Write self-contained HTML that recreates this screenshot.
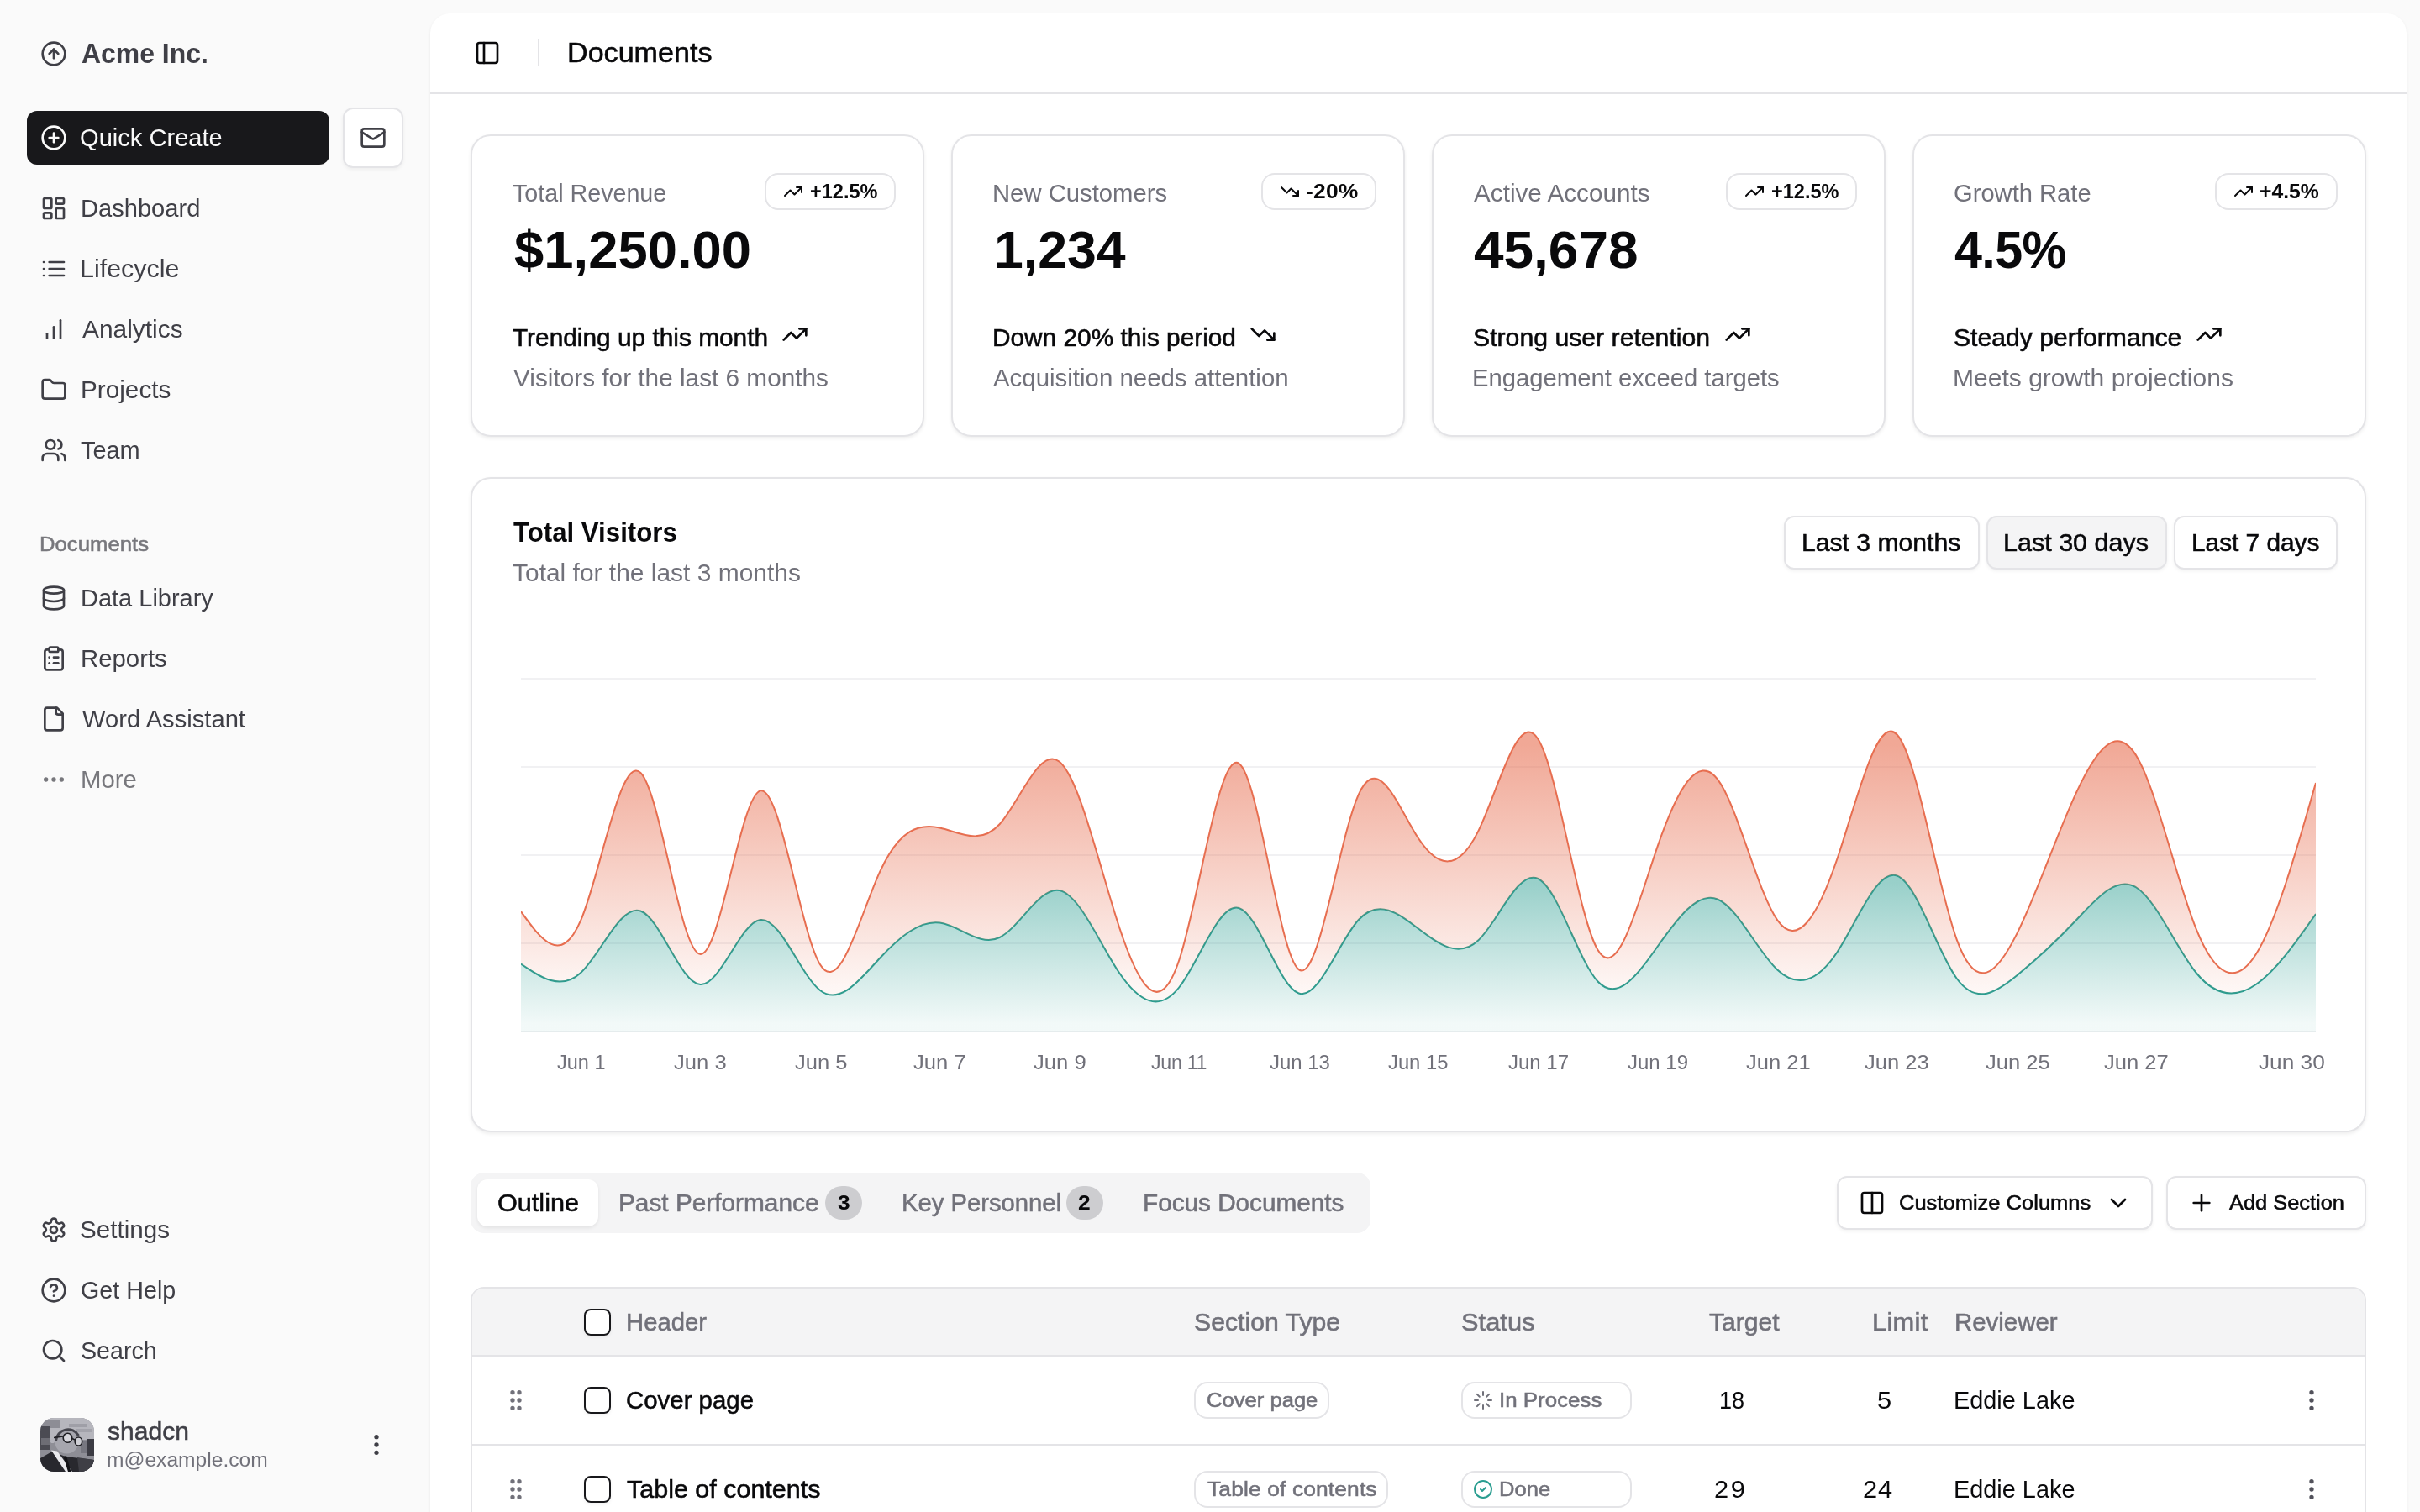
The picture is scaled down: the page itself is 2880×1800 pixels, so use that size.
<!DOCTYPE html>
<html lang="en"><head><meta charset="utf-8"><title>Documents</title>
<style>
*{box-sizing:border-box;margin:0;padding:0}
html,body{width:2880px;height:1800px;overflow:hidden;background:#fafafa;font-family:"Liberation Sans",sans-serif;-webkit-font-smoothing:antialiased}
.t{position:absolute;white-space:nowrap;transform-origin:0 0}
.ic{position:absolute;display:block;overflow:visible}
.abs{position:absolute}
.card{position:absolute;background:#fff;border:2px solid #e4e4e7;border-radius:24px;box-shadow:0 2px 4px 0 rgba(0,0,0,.07)}
.badge{position:absolute;border:2px solid #e4e4e7;border-radius:16px;background:#fff}
.btn{position:absolute;border:2px solid #e4e4e7;border-radius:12px;background:#fff;box-shadow:0 2px 4px 0 rgba(0,0,0,.05)}
.cb{position:absolute;width:32px;height:32px;border:2px solid #18181b;border-radius:8px;background:#fff;box-shadow:0 2px 4px 0 rgba(0,0,0,.05)}
#root{position:absolute;left:0;top:0;width:2880px;height:1800px;overflow:hidden;will-change:transform}
@media (max-width:1600px){html,body{width:1440px;height:900px}#root{zoom:.5}}
</style></head><body><div id="root">

<svg class="ic" style="left:48px;top:48px;color:#3f3f46" width="32" height="32" viewBox="0 0 24 24" fill="none" stroke="currentColor" stroke-width="2" stroke-linecap="round" stroke-linejoin="round" ><circle cx="12" cy="12" r="10"/><path d="m16 12-4-4-4 4"/><path d="M12 16V8"/></svg>
<div class="t" style="left:96.75px;top:47.30px;font-size:33.0px;line-height:33.0px;color:#3f3f46;font-weight:700;transform:scaleX(0.9674);">Acme Inc.</div>
<div class="abs" style="left:32px;top:132px;width:360px;height:64px;border-radius:12px;background:#18181b"></div>
<svg class="ic" style="left:48px;top:148px;color:#fafafa" width="32" height="32" viewBox="0 0 24 24" fill="none" stroke="currentColor" stroke-width="2" stroke-linecap="round" stroke-linejoin="round" ><circle cx="12" cy="12" r="10"/><path d="M8 12h8"/><path d="M12 8v8"/></svg>
<div class="t" style="left:95.47px;top:149.90px;font-size:28.8px;line-height:28.8px;color:#fafafa;font-weight:400;transform:scaleX(1.0104);">Quick Create</div>
<div class="btn" style="left:408px;top:128px;width:72px;height:72px"></div>
<svg class="ic" style="left:428px;top:148px;color:#3f3f46" width="32" height="32" viewBox="0 0 24 24" fill="none" stroke="currentColor" stroke-width="2" stroke-linecap="round" stroke-linejoin="round" ><rect width="20" height="16" x="2" y="4" rx="2"/><path d="m22 7-8.97 5.7a1.94 1.94 0 0 1-2.06 0L2 7"/></svg>
<svg class="ic" style="left:48px;top:232px;color:#3f3f46" width="32" height="32" viewBox="0 0 24 24" fill="none" stroke="currentColor" stroke-width="2" stroke-linecap="round" stroke-linejoin="round" ><rect width="7" height="9" x="3" y="3" rx="1"/><rect width="7" height="5" x="14" y="3" rx="1"/><rect width="7" height="9" x="14" y="12" rx="1"/><rect width="7" height="5" x="3" y="16" rx="1"/></svg>
<div class="t" style="left:95.73px;top:233.90px;font-size:28.8px;line-height:28.8px;color:#3f3f46;font-weight:400;transform:scaleX(1.0103);">Dashboard</div>
<svg class="ic" style="left:48px;top:304px;color:#3f3f46" width="32" height="32" viewBox="0 0 24 24" fill="none" stroke="currentColor" stroke-width="2" stroke-linecap="round" stroke-linejoin="round" ><path d="M3 12h.01"/><path d="M3 18h.01"/><path d="M3 6h.01"/><path d="M8 12h13"/><path d="M8 18h13"/><path d="M8 6h13"/></svg>
<div class="t" style="left:95.34px;top:305.90px;font-size:28.8px;line-height:28.8px;color:#3f3f46;font-weight:400;transform:scaleX(1.0563);">Lifecycle</div>
<svg class="ic" style="left:48px;top:376px;color:#3f3f46" width="32" height="32" viewBox="0 0 24 24" fill="none" stroke="currentColor" stroke-width="2" stroke-linecap="round" stroke-linejoin="round" ><path d="M12 20V10"/><path d="M18 20V4"/><path d="M6 20v-4"/></svg>
<div class="t" style="left:97.52px;top:377.90px;font-size:28.8px;line-height:28.8px;color:#3f3f46;font-weight:400;transform:scaleX(1.0384);">Analytics</div>
<svg class="ic" style="left:48px;top:448px;color:#3f3f46" width="32" height="32" viewBox="0 0 24 24" fill="none" stroke="currentColor" stroke-width="2" stroke-linecap="round" stroke-linejoin="round" ><path d="M20 20a2 2 0 0 0 2-2V8a2 2 0 0 0-2-2h-7.9a2 2 0 0 1-1.69-.9L9.6 3.9A2 2 0 0 0 7.93 3H4a2 2 0 0 0-2 2v13a2 2 0 0 0 2 2Z"/></svg>
<div class="t" style="left:95.55px;top:449.90px;font-size:28.8px;line-height:28.8px;color:#3f3f46;font-weight:400;transform:scaleX(1.0323);">Projects</div>
<svg class="ic" style="left:48px;top:520px;color:#3f3f46" width="32" height="32" viewBox="0 0 24 24" fill="none" stroke="currentColor" stroke-width="2" stroke-linecap="round" stroke-linejoin="round" ><path d="M16 21v-2a4 4 0 0 0-4-4H6a4 4 0 0 0-4 4v2"/><circle cx="9" cy="7" r="4"/><path d="M22 21v-2a4 4 0 0 0-3-3.87"/><path d="M16 3.13a4 4 0 0 1 0 7.75"/></svg>
<div class="t" style="left:95.68px;top:521.90px;font-size:28.8px;line-height:28.8px;color:#3f3f46;font-weight:400;transform:scaleX(1.0037);">Team</div>
<div class="t" style="left:46.82px;top:636.25px;font-size:24.7px;line-height:24.7px;color:#77777c;font-weight:400;transform:scaleX(1.0413);-webkit-text-stroke:0.55px;">Documents</div>
<svg class="ic" style="left:48px;top:696px;color:#3f3f46" width="32" height="32" viewBox="0 0 24 24" fill="none" stroke="currentColor" stroke-width="2" stroke-linecap="round" stroke-linejoin="round" ><ellipse cx="12" cy="5" rx="9" ry="3"/><path d="M3 5V19A9 3 0 0 0 21 19V5"/><path d="M3 12A9 3 0 0 0 21 12"/></svg>
<div class="t" style="left:95.78px;top:697.90px;font-size:28.8px;line-height:28.8px;color:#3f3f46;font-weight:400;transform:scaleX(1.0064);">Data Library</div>
<svg class="ic" style="left:48px;top:768px;color:#3f3f46" width="32" height="32" viewBox="0 0 24 24" fill="none" stroke="currentColor" stroke-width="2" stroke-linecap="round" stroke-linejoin="round" ><rect width="8" height="4" x="8" y="2" rx="1" ry="1"/><path d="M16 4h2a2 2 0 0 1 2 2v14a2 2 0 0 1-2 2H6a2 2 0 0 1-2-2V6a2 2 0 0 1 2-2h2"/><path d="M12 11h4"/><path d="M12 16h4"/><path d="M8 11h.01"/><path d="M8 16h.01"/></svg>
<div class="t" style="left:95.67px;top:769.90px;font-size:28.8px;line-height:28.8px;color:#3f3f46;font-weight:400;transform:scaleX(1.0193);">Reports</div>
<svg class="ic" style="left:48px;top:840px;color:#3f3f46" width="32" height="32" viewBox="0 0 24 24" fill="none" stroke="currentColor" stroke-width="2" stroke-linecap="round" stroke-linejoin="round" ><path d="M15 2H6a2 2 0 0 0-2 2v16a2 2 0 0 0 2 2h12a2 2 0 0 0 2-2V7Z"/><path d="M14 2v4a2 2 0 0 0 2 2h4"/></svg>
<div class="t" style="left:97.51px;top:841.90px;font-size:28.8px;line-height:28.8px;color:#3f3f46;font-weight:400;transform:scaleX(1.0128);">Word Assistant</div>
<svg class="ic" style="left:48px;top:912px;color:#77777c" width="32" height="32" viewBox="0 0 24 24" fill="none" stroke="currentColor" stroke-width="2" stroke-linecap="round" stroke-linejoin="round" ><circle cx="12" cy="12" r="1"/><circle cx="19" cy="12" r="1"/><circle cx="5" cy="12" r="1"/></svg>
<div class="t" style="left:95.66px;top:913.90px;font-size:28.8px;line-height:28.8px;color:#77777c;font-weight:400;transform:scaleX(1.0191);">More</div>
<svg class="ic" style="left:48px;top:1448px;color:#3f3f46" width="32" height="32" viewBox="0 0 24 24" fill="none" stroke="currentColor" stroke-width="2" stroke-linecap="round" stroke-linejoin="round" ><path d="M12.22 2h-.44a2 2 0 0 0-2 2v.18a2 2 0 0 1-1 1.73l-.43.25a2 2 0 0 1-2 0l-.15-.08a2 2 0 0 0-2.73.73l-.22.38a2 2 0 0 0 .73 2.73l.15.1a2 2 0 0 1 1 1.72v.51a2 2 0 0 1-1 1.74l-.15.09a2 2 0 0 0-.73 2.73l.22.38a2 2 0 0 0 2.73.73l.15-.08a2 2 0 0 1 2 0l.43.25a2 2 0 0 1 1 1.73V20a2 2 0 0 0 2 2h.44a2 2 0 0 0 2-2v-.18a2 2 0 0 1 1-1.73l.43-.25a2 2 0 0 1 2 0l.15.08a2 2 0 0 0 2.73-.73l.22-.39a2 2 0 0 0-.73-2.73l-.15-.08a2 2 0 0 1-1-1.74v-.5a2 2 0 0 1 1-1.74l.15-.09a2 2 0 0 0 .73-2.73l-.22-.38a2 2 0 0 0-2.73-.73l-.15.08a2 2 0 0 1-2 0l-.43-.25a2 2 0 0 1-1-1.73V4a2 2 0 0 0-2-2z"/><circle cx="12" cy="12" r="3"/></svg>
<div class="t" style="left:95.00px;top:1449.90px;font-size:28.8px;line-height:28.8px;color:#3f3f46;font-weight:400;transform:scaleX(1.0283);">Settings</div>
<svg class="ic" style="left:48px;top:1520px;color:#3f3f46" width="32" height="32" viewBox="0 0 24 24" fill="none" stroke="currentColor" stroke-width="2" stroke-linecap="round" stroke-linejoin="round" ><circle cx="12" cy="12" r="10"/><path d="M9.09 9a3 3 0 0 1 5.83 1c0 2-3 3-3 3"/><path d="M12 17h.01"/></svg>
<div class="t" style="left:95.92px;top:1521.90px;font-size:28.8px;line-height:28.8px;color:#3f3f46;font-weight:400;transform:scaleX(0.9965);">Get Help</div>
<svg class="ic" style="left:48px;top:1592px;color:#3f3f46" width="32" height="32" viewBox="0 0 24 24" fill="none" stroke="currentColor" stroke-width="2" stroke-linecap="round" stroke-linejoin="round" ><circle cx="11" cy="11" r="8"/><path d="m21 21-4.3-4.3"/></svg>
<div class="t" style="left:95.86px;top:1593.90px;font-size:28.8px;line-height:28.8px;color:#3f3f46;font-weight:400;transform:scaleX(0.9952);">Search</div>
<svg class="ic" style="left:48px;top:1688px" width="64" height="64" viewBox="0 0 64 64"><defs><clipPath id="av"><rect width="64" height="64" rx="16"/></clipPath></defs><g clip-path="url(#av)"><rect width="64" height="64" fill="#8e8e96"/><rect width="64" height="26" fill="#b6b6bd"/><rect y="3" width="24" height="9" fill="#8d8d95"/><rect x="34" y="7" width="22" height="4" fill="#9f9fa7"/><rect x="42" y="13" width="20" height="4" fill="#a3a3ab"/><rect y="10" width="12" height="28" fill="#4b4b53"/><rect x="1" y="24" width="10" height="8" fill="#6d6d75"/><rect x="56" y="25" width="8" height="20" fill="#3b3b43"/><rect x="48" y="28" width="8" height="14" fill="#777780"/><path d="M0 48L14 40L30 46L64 50V64H0Z" fill="#28282e"/><path d="M44 47L64 50V64H46Z" fill="#3e3e45"/><circle cx="31.4" cy="28.5" r="14" fill="#a6a6ae"/><path d="M18.5 27A14.5 14.5 0 0 1 45.5 21" stroke="#45454d" stroke-width="3" fill="none"/><circle cx="14.5" cy="27.5" r="2.6" fill="#b3b3bb"/><ellipse cx="32.5" cy="23.8" rx="5.3" ry="5.5" fill="#d6d6dc" stroke="#1f1f24" stroke-width="1.6"/><ellipse cx="45.4" cy="28" rx="4.3" ry="5" fill="#cfcfd5" stroke="#1f1f24" stroke-width="1.6"/><path d="M16 23.5L27 22M38 24.5L41 26" stroke="#1f1f24" stroke-width="1.6" fill="none"/><path d="M13 38.5L20 39.5L38 64H30Z" fill="#e9e9ed"/><path d="M27.5 46L31 45L36.5 64H33Z" fill="#131317"/></g></svg>
<div class="t" style="left:128.17px;top:1689.90px;font-size:28.8px;line-height:28.8px;color:#3f3f46;font-weight:400;transform:scaleX(1.0434);-webkit-text-stroke:0.55px;">shadcn</div>
<div class="t" style="left:127.30px;top:1726.25px;font-size:24.7px;line-height:24.7px;color:#71717a;font-weight:400;transform:scaleX(0.9960);">m@example.com</div>
<svg class="ic" style="left:432px;top:1704px;color:#3f3f46" width="32" height="32" viewBox="0 0 24 24" fill="none" stroke="currentColor" stroke-width="2" stroke-linecap="round" stroke-linejoin="round" ><circle cx="12" cy="12" r="1"/><circle cx="12" cy="5" r="1"/><circle cx="12" cy="19" r="1"/></svg>
<div class="abs" style="left:512px;top:16px;width:2352px;height:1900px;background:#fff;border-radius:24px;box-shadow:0 2px 4px 0 rgba(0,0,0,.07)"></div>
<div class="abs" style="left:512px;top:110px;width:2352px;height:2px;background:#e4e4e7"></div>
<svg class="ic" style="left:564px;top:47px;color:#09090b" width="32" height="32" viewBox="0 0 24 24" fill="none" stroke="currentColor" stroke-width="2" stroke-linecap="round" stroke-linejoin="round" ><rect width="18" height="18" x="3" y="3" rx="2"/><path d="M9 3v18"/></svg>
<div class="abs" style="left:640px;top:47px;width:2px;height:32px;background:#e4e4e7"></div>
<div class="t" style="left:674.51px;top:46.30px;font-size:33.0px;line-height:33.0px;color:#09090b;font-weight:400;transform:scaleX(1.0334);-webkit-text-stroke:0.55px;">Documents</div>
<div class="card" style="left:560px;top:160px;width:540px;height:360px"></div>
<div class="t" style="left:609.72px;top:215.90px;font-size:28.8px;line-height:28.8px;color:#71717a;font-weight:400;transform:scaleX(0.9953);">Total Revenue</div>
<div class="t" style="left:612.12px;top:265.80px;font-size:63px;line-height:63px;color:#09090b;font-weight:700;transform:scaleX(1.0063);">$1,250.00</div>
<div class="badge" style="left:910px;top:206px;width:156px;height:44px"></div>
<svg class="ic" style="left:932px;top:216px;color:#09090b" width="24" height="24" viewBox="0 0 24 24" fill="none" stroke="currentColor" stroke-width="2" stroke-linecap="round" stroke-linejoin="round" ><polyline points="22 7 13.5 15.5 8.5 10.5 2 17"/><polyline points="16 7 22 7 22 13"/></svg>
<div class="t" style="left:964.05px;top:216.25px;font-size:24.7px;line-height:24.7px;color:#09090b;font-weight:700;transform:scaleX(0.9530);">+12.5%</div>
<div class="t" style="left:609.90px;top:387.90px;font-size:28.8px;line-height:28.8px;color:#09090b;font-weight:400;transform:scaleX(1.0362);-webkit-text-stroke:0.55px;">Trending up this month</div>
<svg class="ic" style="left:930px;top:382px;color:#09090b" width="32" height="32" viewBox="0 0 24 24" fill="none" stroke="currentColor" stroke-width="2" stroke-linecap="round" stroke-linejoin="round" ><polyline points="22 7 13.5 15.5 8.5 10.5 2 17"/><polyline points="16 7 22 7 22 13"/></svg>
<div class="t" style="left:610.82px;top:435.90px;font-size:28.8px;line-height:28.8px;color:#71717a;font-weight:400;transform:scaleX(1.0336);">Visitors for the last 6 months</div>
<div class="card" style="left:1132px;top:160px;width:540px;height:360px"></div>
<div class="t" style="left:1180.61px;top:215.90px;font-size:28.8px;line-height:28.8px;color:#71717a;font-weight:400;transform:scaleX(1.0157);">New Customers</div>
<div class="t" style="left:1182.70px;top:265.80px;font-size:63px;line-height:63px;color:#09090b;font-weight:700;transform:scaleX(0.9938);">1,234</div>
<div class="badge" style="left:1501px;top:206px;width:137px;height:44px"></div>
<svg class="ic" style="left:1523px;top:216px;color:#09090b" width="24" height="24" viewBox="0 0 24 24" fill="none" stroke="currentColor" stroke-width="2" stroke-linecap="round" stroke-linejoin="round" ><polyline points="22 17 13.5 8.5 8.5 13.5 2 7"/><polyline points="16 17 22 17 22 11"/></svg>
<div class="t" style="left:1554.17px;top:216.25px;font-size:24.7px;line-height:24.7px;color:#09090b;font-weight:700;transform:scaleX(1.0700);letter-spacing:0.189px;">-20%</div>
<div class="t" style="left:1180.53px;top:387.90px;font-size:28.8px;line-height:28.8px;color:#09090b;font-weight:400;transform:scaleX(1.0350);-webkit-text-stroke:0.55px;">Down 20% this period</div>
<svg class="ic" style="left:1487px;top:382px;color:#09090b" width="32" height="32" viewBox="0 0 24 24" fill="none" stroke="currentColor" stroke-width="2" stroke-linecap="round" stroke-linejoin="round" ><polyline points="22 17 13.5 8.5 8.5 13.5 2 7"/><polyline points="16 17 22 17 22 11"/></svg>
<div class="t" style="left:1182.29px;top:435.90px;font-size:28.8px;line-height:28.8px;color:#71717a;font-weight:400;transform:scaleX(1.0215);">Acquisition needs attention</div>
<div class="card" style="left:1704px;top:160px;width:540px;height:360px"></div>
<div class="t" style="left:1754.45px;top:215.90px;font-size:28.8px;line-height:28.8px;color:#71717a;font-weight:400;transform:scaleX(1.0306);">Active Accounts</div>
<div class="t" style="left:1754.14px;top:265.80px;font-size:63px;line-height:63px;color:#09090b;font-weight:700;transform:scaleX(1.0147);">45,678</div>
<div class="badge" style="left:2054px;top:206px;width:156px;height:44px"></div>
<svg class="ic" style="left:2076px;top:216px;color:#09090b" width="24" height="24" viewBox="0 0 24 24" fill="none" stroke="currentColor" stroke-width="2" stroke-linecap="round" stroke-linejoin="round" ><polyline points="22 7 13.5 15.5 8.5 10.5 2 17"/><polyline points="16 7 22 7 22 13"/></svg>
<div class="t" style="left:2108.05px;top:216.25px;font-size:24.7px;line-height:24.7px;color:#09090b;font-weight:700;transform:scaleX(0.9530);">+12.5%</div>
<div class="t" style="left:1753.49px;top:387.90px;font-size:28.8px;line-height:28.8px;color:#09090b;font-weight:400;transform:scaleX(1.0491);-webkit-text-stroke:0.55px;">Strong user retention</div>
<svg class="ic" style="left:2051.6px;top:382px;color:#09090b" width="32" height="32" viewBox="0 0 24 24" fill="none" stroke="currentColor" stroke-width="2" stroke-linecap="round" stroke-linejoin="round" ><polyline points="22 7 13.5 15.5 8.5 10.5 2 17"/><polyline points="16 7 22 7 22 13"/></svg>
<div class="t" style="left:1752.07px;top:435.90px;font-size:28.8px;line-height:28.8px;color:#71717a;font-weight:400;transform:scaleX(1.0151);">Engagement exceed targets</div>
<div class="card" style="left:2276px;top:160px;width:540px;height:360px"></div>
<div class="t" style="left:2324.87px;top:215.90px;font-size:28.8px;line-height:28.8px;color:#71717a;font-weight:400;transform:scaleX(1.0123);">Growth Rate</div>
<div class="t" style="left:2326.30px;top:265.80px;font-size:63px;line-height:63px;color:#09090b;font-weight:700;transform:scaleX(0.9400);letter-spacing:-0.629px;">4.5%</div>
<div class="badge" style="left:2636px;top:206px;width:146px;height:44px"></div>
<svg class="ic" style="left:2658px;top:216px;color:#09090b" width="24" height="24" viewBox="0 0 24 24" fill="none" stroke="currentColor" stroke-width="2" stroke-linecap="round" stroke-linejoin="round" ><polyline points="22 7 13.5 15.5 8.5 10.5 2 17"/><polyline points="16 7 22 7 22 13"/></svg>
<div class="t" style="left:2688.89px;top:216.25px;font-size:24.7px;line-height:24.7px;color:#09090b;font-weight:700;transform:scaleX(1.0011);">+4.5%</div>
<div class="t" style="left:2324.91px;top:387.90px;font-size:28.8px;line-height:28.8px;color:#09090b;font-weight:400;transform:scaleX(1.0462);-webkit-text-stroke:0.55px;">Steady performance</div>
<svg class="ic" style="left:2613px;top:382px;color:#09090b" width="32" height="32" viewBox="0 0 24 24" fill="none" stroke="currentColor" stroke-width="2" stroke-linecap="round" stroke-linejoin="round" ><polyline points="22 7 13.5 15.5 8.5 10.5 2 17"/><polyline points="16 7 22 7 22 13"/></svg>
<div class="t" style="left:2323.97px;top:435.90px;font-size:28.8px;line-height:28.8px;color:#71717a;font-weight:400;transform:scaleX(1.0432);">Meets growth projections</div>
<div class="card" style="left:560px;top:568px;width:2256px;height:780px"></div>
<div class="t" style="left:610.80px;top:617.30px;font-size:33.0px;line-height:33.0px;color:#09090b;font-weight:700;transform:scaleX(0.9454);">Total Visitors</div>
<div class="t" style="left:609.72px;top:667.90px;font-size:28.8px;line-height:28.8px;color:#71717a;font-weight:400;transform:scaleX(1.0400);">Total for the last 3 months</div>
<div class="btn" style="left:2123px;top:614px;width:233px;height:64px;background:#fff"></div>
<div class="t" style="left:2144.10px;top:631.90px;font-size:28.8px;line-height:28.8px;color:#09090b;font-weight:400;transform:scaleX(1.0464);-webkit-text-stroke:0.55px;">Last 3 months</div>
<div class="btn" style="left:2364px;top:614px;width:215px;height:64px;background:#f4f4f5"></div>
<div class="t" style="left:2384.04px;top:631.90px;font-size:28.8px;line-height:28.8px;color:#09090b;font-weight:400;transform:scaleX(1.0592);-webkit-text-stroke:0.55px;">Last 30 days</div>
<div class="btn" style="left:2587px;top:614px;width:195px;height:64px;background:#fff"></div>
<div class="t" style="left:2607.70px;top:631.90px;font-size:28.8px;line-height:28.8px;color:#09090b;font-weight:400;transform:scaleX(1.0343);-webkit-text-stroke:0.55px;">Last 7 days</div>
<svg class="ic" style="left:0;top:0" width="2880" height="1800" viewBox="0 0 2880 1800"><defs><linearGradient id="gd" x1="0" y1="0" x2="0" y2="1"><stop offset="5%" stop-color="#e76e50" stop-opacity="1"/><stop offset="95%" stop-color="#e76e50" stop-opacity="0.1"/></linearGradient><linearGradient id="gm" x1="0" y1="0" x2="0" y2="1"><stop offset="5%" stop-color="#2a9d90" stop-opacity="0.8"/><stop offset="95%" stop-color="#2a9d90" stop-opacity="0.1"/></linearGradient><clipPath id="cp"><rect x="620" y="808" width="2136" height="421"/></clipPath></defs><line x1="620" x2="2756" y1="808" y2="808" stroke="#e4e4e7" stroke-opacity="0.5" stroke-width="2"/><line x1="620" x2="2756" y1="913" y2="913" stroke="#e4e4e7" stroke-opacity="0.5" stroke-width="2"/><line x1="620" x2="2756" y1="1018" y2="1018" stroke="#e4e4e7" stroke-opacity="0.5" stroke-width="2"/><line x1="620" x2="2756" y1="1123" y2="1123" stroke="#e4e4e7" stroke-opacity="0.5" stroke-width="2"/><line x1="620" x2="2756" y1="1228" y2="1228" stroke="#e4e4e7" stroke-opacity="0.5" stroke-width="2"/><g clip-path="url(#cp)"><path d="M620.00,1147.50C643.73,1163.74,667.47,1179.98,691.20,1158.00C714.93,1136.02,738.67,1075.82,762.40,1084.50C786.13,1093.18,809.87,1170.74,833.60,1172.00C857.33,1173.26,881.07,1098.21,904.80,1095.00C928.53,1091.79,952.27,1160.43,976.00,1179.00C999.73,1197.57,1023.47,1166.05,1047.20,1140.50C1070.93,1114.95,1094.67,1095.35,1118.40,1098.50C1142.13,1101.65,1165.87,1127.56,1189.60,1116.00C1213.33,1104.44,1237.07,1055.41,1260.80,1060.00C1284.53,1064.59,1308.27,1122.81,1332.00,1158.00C1355.73,1193.19,1379.47,1205.34,1403.20,1175.50C1426.93,1145.66,1450.67,1073.83,1474.40,1081.00C1498.13,1088.17,1521.87,1174.34,1545.60,1182.50C1569.33,1190.66,1593.07,1120.83,1616.80,1095.00C1640.53,1069.17,1664.27,1087.35,1688.00,1105.50C1711.73,1123.65,1735.47,1141.77,1759.20,1119.50C1782.93,1097.23,1806.67,1034.59,1830.40,1046.00C1854.13,1057.41,1877.87,1142.89,1901.60,1168.50C1925.33,1194.11,1949.07,1159.85,1972.80,1126.50C1996.53,1093.15,2020.27,1060.72,2044.00,1070.50C2067.73,1080.28,2091.47,1132.26,2115.20,1154.50C2138.93,1176.74,2162.67,1169.24,2186.40,1133.50C2210.13,1097.76,2233.87,1033.79,2257.60,1042.50C2281.33,1051.21,2305.07,1132.60,2328.80,1165.00C2352.53,1197.40,2376.27,1180.83,2400.00,1161.50C2423.73,1142.17,2447.47,1120.09,2471.20,1095.00C2494.93,1069.91,2518.67,1041.80,2542.40,1056.50C2566.13,1071.20,2589.87,1128.71,2613.60,1158.00C2637.33,1187.29,2661.07,1188.37,2684.80,1172.00C2708.53,1155.63,2732.27,1121.82,2756.00,1088.00L2756.00,1228.00L620.00,1228.00Z" fill="url(#gm)" fill-opacity="0.6"/><path d="M620.00,1147.50C643.73,1163.74,667.47,1179.98,691.20,1158.00C714.93,1136.02,738.67,1075.82,762.40,1084.50C786.13,1093.18,809.87,1170.74,833.60,1172.00C857.33,1173.26,881.07,1098.21,904.80,1095.00C928.53,1091.79,952.27,1160.43,976.00,1179.00C999.73,1197.57,1023.47,1166.05,1047.20,1140.50C1070.93,1114.95,1094.67,1095.35,1118.40,1098.50C1142.13,1101.65,1165.87,1127.56,1189.60,1116.00C1213.33,1104.44,1237.07,1055.41,1260.80,1060.00C1284.53,1064.59,1308.27,1122.81,1332.00,1158.00C1355.73,1193.19,1379.47,1205.34,1403.20,1175.50C1426.93,1145.66,1450.67,1073.83,1474.40,1081.00C1498.13,1088.17,1521.87,1174.34,1545.60,1182.50C1569.33,1190.66,1593.07,1120.83,1616.80,1095.00C1640.53,1069.17,1664.27,1087.35,1688.00,1105.50C1711.73,1123.65,1735.47,1141.77,1759.20,1119.50C1782.93,1097.23,1806.67,1034.59,1830.40,1046.00C1854.13,1057.41,1877.87,1142.89,1901.60,1168.50C1925.33,1194.11,1949.07,1159.85,1972.80,1126.50C1996.53,1093.15,2020.27,1060.72,2044.00,1070.50C2067.73,1080.28,2091.47,1132.26,2115.20,1154.50C2138.93,1176.74,2162.67,1169.24,2186.40,1133.50C2210.13,1097.76,2233.87,1033.79,2257.60,1042.50C2281.33,1051.21,2305.07,1132.60,2328.80,1165.00C2352.53,1197.40,2376.27,1180.83,2400.00,1161.50C2423.73,1142.17,2447.47,1120.09,2471.20,1095.00C2494.93,1069.91,2518.67,1041.80,2542.40,1056.50C2566.13,1071.20,2589.87,1128.71,2613.60,1158.00C2637.33,1187.29,2661.07,1188.37,2684.80,1172.00C2708.53,1155.63,2732.27,1121.82,2756.00,1088.00" fill="none" stroke="#2a9d90" stroke-width="2"/><path d="M620.00,1085.20C643.73,1118.18,667.47,1151.15,691.20,1095.70C714.93,1040.25,738.67,896.36,762.40,920.00C786.13,943.64,809.87,1134.80,833.60,1135.95C857.33,1137.10,881.07,948.25,904.80,941.35C928.53,934.45,952.27,1109.49,976.00,1148.20C999.73,1186.91,1023.47,1089.28,1047.20,1037.60C1070.93,985.92,1094.67,980.17,1118.40,985.45C1142.13,990.73,1165.87,1007.02,1189.60,981.25C1213.33,955.48,1237.07,887.65,1260.80,906.70C1284.53,925.75,1308.27,1031.69,1332.00,1103.75C1355.73,1175.81,1379.47,1213.99,1403.20,1143.30C1426.93,1072.61,1450.67,893.04,1474.40,908.80C1498.13,924.56,1521.87,1135.65,1545.60,1154.15C1569.33,1172.65,1593.07,998.57,1616.80,945.90C1640.53,893.23,1664.27,961.95,1688.00,998.05C1711.73,1034.15,1735.47,1037.61,1759.20,989.65C1782.93,941.69,1806.67,842.31,1830.40,879.75C1854.13,917.19,1877.87,1091.45,1901.60,1131.05C1925.33,1170.65,1949.07,1075.58,1972.80,1007.15C1996.53,938.72,2020.27,896.92,2044.00,927.70C2067.73,958.48,2091.47,1061.86,2115.20,1095.35C2138.93,1128.84,2162.67,1092.46,2186.40,1022.55C2210.13,952.64,2233.87,849.20,2257.60,874.50C2281.33,899.80,2305.07,1053.86,2328.80,1118.80C2352.53,1183.74,2376.27,1159.57,2400.00,1112.15C2423.73,1064.73,2447.47,994.04,2471.20,943.10C2494.93,892.16,2518.67,860.95,2542.40,899.70C2566.13,938.45,2589.87,1047.14,2613.60,1105.85C2637.33,1164.56,2661.07,1173.27,2684.80,1135.95C2708.53,1098.63,2732.27,1015.26,2756.00,931.90L2756.00,1088.00C2732.27,1121.82,2708.53,1155.63,2684.80,1172.00C2661.07,1188.37,2637.33,1187.29,2613.60,1158.00C2589.87,1128.71,2566.13,1071.20,2542.40,1056.50C2518.67,1041.80,2494.93,1069.91,2471.20,1095.00C2447.47,1120.09,2423.73,1142.17,2400.00,1161.50C2376.27,1180.83,2352.53,1197.40,2328.80,1165.00C2305.07,1132.60,2281.33,1051.21,2257.60,1042.50C2233.87,1033.79,2210.13,1097.76,2186.40,1133.50C2162.67,1169.24,2138.93,1176.74,2115.20,1154.50C2091.47,1132.26,2067.73,1080.28,2044.00,1070.50C2020.27,1060.72,1996.53,1093.15,1972.80,1126.50C1949.07,1159.85,1925.33,1194.11,1901.60,1168.50C1877.87,1142.89,1854.13,1057.41,1830.40,1046.00C1806.67,1034.59,1782.93,1097.23,1759.20,1119.50C1735.47,1141.77,1711.73,1123.65,1688.00,1105.50C1664.27,1087.35,1640.53,1069.17,1616.80,1095.00C1593.07,1120.83,1569.33,1190.66,1545.60,1182.50C1521.87,1174.34,1498.13,1088.17,1474.40,1081.00C1450.67,1073.83,1426.93,1145.66,1403.20,1175.50C1379.47,1205.34,1355.73,1193.19,1332.00,1158.00C1308.27,1122.81,1284.53,1064.59,1260.80,1060.00C1237.07,1055.41,1213.33,1104.44,1189.60,1116.00C1165.87,1127.56,1142.13,1101.65,1118.40,1098.50C1094.67,1095.35,1070.93,1114.95,1047.20,1140.50C1023.47,1166.05,999.73,1197.57,976.00,1179.00C952.27,1160.43,928.53,1091.79,904.80,1095.00C881.07,1098.21,857.33,1173.26,833.60,1172.00C809.87,1170.74,786.13,1093.18,762.40,1084.50C738.67,1075.82,714.93,1136.02,691.20,1158.00C667.47,1179.98,643.73,1163.74,620.00,1147.50Z" fill="url(#gd)" fill-opacity="0.6"/><path d="M620.00,1085.20C643.73,1118.18,667.47,1151.15,691.20,1095.70C714.93,1040.25,738.67,896.36,762.40,920.00C786.13,943.64,809.87,1134.80,833.60,1135.95C857.33,1137.10,881.07,948.25,904.80,941.35C928.53,934.45,952.27,1109.49,976.00,1148.20C999.73,1186.91,1023.47,1089.28,1047.20,1037.60C1070.93,985.92,1094.67,980.17,1118.40,985.45C1142.13,990.73,1165.87,1007.02,1189.60,981.25C1213.33,955.48,1237.07,887.65,1260.80,906.70C1284.53,925.75,1308.27,1031.69,1332.00,1103.75C1355.73,1175.81,1379.47,1213.99,1403.20,1143.30C1426.93,1072.61,1450.67,893.04,1474.40,908.80C1498.13,924.56,1521.87,1135.65,1545.60,1154.15C1569.33,1172.65,1593.07,998.57,1616.80,945.90C1640.53,893.23,1664.27,961.95,1688.00,998.05C1711.73,1034.15,1735.47,1037.61,1759.20,989.65C1782.93,941.69,1806.67,842.31,1830.40,879.75C1854.13,917.19,1877.87,1091.45,1901.60,1131.05C1925.33,1170.65,1949.07,1075.58,1972.80,1007.15C1996.53,938.72,2020.27,896.92,2044.00,927.70C2067.73,958.48,2091.47,1061.86,2115.20,1095.35C2138.93,1128.84,2162.67,1092.46,2186.40,1022.55C2210.13,952.64,2233.87,849.20,2257.60,874.50C2281.33,899.80,2305.07,1053.86,2328.80,1118.80C2352.53,1183.74,2376.27,1159.57,2400.00,1112.15C2423.73,1064.73,2447.47,994.04,2471.20,943.10C2494.93,892.16,2518.67,860.95,2542.40,899.70C2566.13,938.45,2589.87,1047.14,2613.60,1105.85C2637.33,1164.56,2661.07,1173.27,2684.80,1135.95C2708.53,1098.63,2732.27,1015.26,2756.00,931.90" fill="none" stroke="#e76e50" stroke-width="2"/></g></svg>
<div class="t" style="left:663.30px;top:1253.25px;font-size:24.7px;line-height:24.7px;color:#71717a;font-weight:400;transform:scaleX(0.9516);">Jun 1</div>
<div class="t" style="left:802.35px;top:1253.25px;font-size:24.7px;line-height:24.7px;color:#71717a;font-weight:400;transform:scaleX(1.0377);">Jun 3</div>
<div class="t" style="left:945.59px;top:1253.25px;font-size:24.7px;line-height:24.7px;color:#71717a;font-weight:400;transform:scaleX(1.0355);">Jun 5</div>
<div class="t" style="left:1087.43px;top:1253.25px;font-size:24.7px;line-height:24.7px;color:#71717a;font-weight:400;transform:scaleX(1.0378);">Jun 7</div>
<div class="t" style="left:1229.97px;top:1253.25px;font-size:24.7px;line-height:24.7px;color:#71717a;font-weight:400;transform:scaleX(1.0384);">Jun 9</div>
<div class="t" style="left:1370.47px;top:1253.25px;font-size:24.7px;line-height:24.7px;color:#71717a;font-weight:400;transform:scaleX(0.9400);letter-spacing:-0.308px;">Jun 11</div>
<div class="t" style="left:1510.55px;top:1253.25px;font-size:24.7px;line-height:24.7px;color:#71717a;font-weight:400;transform:scaleX(0.9705);">Jun 13</div>
<div class="t" style="left:1652.39px;top:1253.25px;font-size:24.7px;line-height:24.7px;color:#71717a;font-weight:400;transform:scaleX(0.9634);">Jun 15</div>
<div class="t" style="left:1794.93px;top:1253.25px;font-size:24.7px;line-height:24.7px;color:#71717a;font-weight:400;transform:scaleX(0.9713);">Jun 17</div>
<div class="t" style="left:1937.47px;top:1253.25px;font-size:24.7px;line-height:24.7px;color:#71717a;font-weight:400;transform:scaleX(0.9709);">Jun 19</div>
<div class="t" style="left:2077.51px;top:1253.25px;font-size:24.7px;line-height:24.7px;color:#71717a;font-weight:400;transform:scaleX(1.0329);">Jun 21</div>
<div class="t" style="left:2219.35px;top:1253.25px;font-size:24.7px;line-height:24.7px;color:#71717a;font-weight:400;transform:scaleX(1.0339);">Jun 23</div>
<div class="t" style="left:2362.59px;top:1253.25px;font-size:24.7px;line-height:24.7px;color:#71717a;font-weight:400;transform:scaleX(1.0332);">Jun 25</div>
<div class="t" style="left:2504.43px;top:1253.25px;font-size:24.7px;line-height:24.7px;color:#71717a;font-weight:400;transform:scaleX(1.0365);">Jun 27</div>
<div class="t" style="left:2687.72px;top:1253.25px;font-size:24.7px;line-height:24.7px;color:#71717a;font-weight:400;transform:scaleX(1.0630);">Jun 30</div>
<div class="abs" style="left:560px;top:1396px;width:1071px;height:72px;border-radius:16px;background:#f4f4f5"></div>
<div class="abs" style="left:568px;top:1404px;width:144px;height:56px;border-radius:12px;background:#fff;box-shadow:0 2px 4px 0 rgba(0,0,0,.07)"></div>
<div class="t" style="left:591.53px;top:1417.90px;font-size:28.8px;line-height:28.8px;color:#09090b;font-weight:400;transform:scaleX(1.0631);-webkit-text-stroke:0.55px;">Outline</div>
<div class="t" style="left:735.66px;top:1417.90px;font-size:28.8px;line-height:28.8px;color:#71717a;font-weight:400;transform:scaleX(1.0347);-webkit-text-stroke:0.55px;">Past Performance</div>
<div class="abs" style="left:982px;top:1412px;width:44px;height:40px;border-radius:20px;background:#cdcdd0"></div>
<div class="t" style="left:996.68px;top:1420.25px;font-size:24.7px;line-height:24.7px;color:#09090b;font-weight:700;transform:scaleX(1.0700);letter-spacing:1.633px;">3</div>
<div class="t" style="left:1072.74px;top:1417.90px;font-size:28.8px;line-height:28.8px;color:#71717a;font-weight:400;transform:scaleX(1.0151);-webkit-text-stroke:0.55px;">Key Personnel</div>
<div class="abs" style="left:1269px;top:1412px;width:44px;height:40px;border-radius:20px;background:#cdcdd0"></div>
<div class="t" style="left:1283.18px;top:1420.25px;font-size:24.7px;line-height:24.7px;color:#09090b;font-weight:700;transform:scaleX(1.0700);letter-spacing:3.069px;">2</div>
<div class="t" style="left:1360.12px;top:1417.90px;font-size:28.8px;line-height:28.8px;color:#71717a;font-weight:400;transform:scaleX(1.0315);-webkit-text-stroke:0.55px;">Focus Documents</div>
<div class="btn" style="left:2186px;top:1400px;width:376px;height:64px"></div>
<svg class="ic" style="left:2212px;top:1416px;color:#09090b" width="32" height="32" viewBox="0 0 24 24" fill="none" stroke="currentColor" stroke-width="2" stroke-linecap="round" stroke-linejoin="round" ><rect width="18" height="18" x="3" y="3" rx="2"/><path d="M12 3v18"/></svg>
<div class="t" style="left:2260.11px;top:1420.25px;font-size:24.7px;line-height:24.7px;color:#09090b;font-weight:400;transform:scaleX(1.0335);-webkit-text-stroke:0.55px;">Customize Columns</div>
<svg class="ic" style="left:2504.5px;top:1416px;color:#09090b" width="32" height="32" viewBox="0 0 24 24" fill="none" stroke="currentColor" stroke-width="2" stroke-linecap="round" stroke-linejoin="round" ><path d="m6 9 6 6 6-6"/></svg>
<div class="btn" style="left:2578px;top:1400px;width:238px;height:64px"></div>
<svg class="ic" style="left:2604px;top:1416px;color:#09090b" width="32" height="32" viewBox="0 0 24 24" fill="none" stroke="currentColor" stroke-width="2" stroke-linecap="round" stroke-linejoin="round" ><path d="M5 12h14"/><path d="M12 5v14"/></svg>
<div class="t" style="left:2652.75px;top:1420.25px;font-size:24.7px;line-height:24.7px;color:#09090b;font-weight:400;transform:scaleX(1.0290);-webkit-text-stroke:0.55px;">Add Section</div>
<div class="abs" style="left:560px;top:1532px;width:2256px;height:400px;border:2px solid #e4e4e7;border-radius:16px;background:#fff;overflow:hidden"><div style="height:79px;background:#f4f4f5"></div></div>
<div class="abs" style="left:562px;top:1613px;width:2252px;height:2px;background:#e4e4e7"></div>
<div class="cb" style="left:695px;top:1558px"></div>
<div class="t" style="left:744.53px;top:1559.90px;font-size:28.8px;line-height:28.8px;color:#71717a;font-weight:400;transform:scaleX(1.0159);-webkit-text-stroke:0.55px;">Header</div>
<div class="t" style="left:1420.91px;top:1559.90px;font-size:28.8px;line-height:28.8px;color:#71717a;font-weight:400;transform:scaleX(1.0492);-webkit-text-stroke:0.55px;">Section Type</div>
<div class="t" style="left:1738.90px;top:1559.90px;font-size:28.8px;line-height:28.8px;color:#71717a;font-weight:400;transform:scaleX(1.0700);letter-spacing:0.038px;-webkit-text-stroke:0.55px;">Status</div>
<div class="t" style="left:2033.88px;top:1559.90px;font-size:28.8px;line-height:28.8px;color:#71717a;font-weight:400;transform:scaleX(1.0443);-webkit-text-stroke:0.55px;">Target</div>
<div class="t" style="left:2228.03px;top:1559.90px;font-size:28.8px;line-height:28.8px;color:#71717a;font-weight:400;transform:scaleX(1.0700);letter-spacing:0.278px;-webkit-text-stroke:0.55px;">Limit</div>
<div class="t" style="left:2325.68px;top:1559.90px;font-size:28.8px;line-height:28.8px;color:#71717a;font-weight:400;transform:scaleX(1.0210);-webkit-text-stroke:0.55px;">Reviewer</div>
<div class="abs" style="left:562px;top:1719px;width:2252px;height:2px;background:#e4e4e7"></div>
<svg class="ic" style="left:598px;top:1651px;color:#71717a" width="32" height="32" viewBox="0 0 24 24" fill="none" stroke="currentColor" stroke-width="2" stroke-linecap="round" stroke-linejoin="round" ><circle cx="9" cy="12" r="1"/><circle cx="9" cy="5" r="1"/><circle cx="9" cy="19" r="1"/><circle cx="15" cy="12" r="1"/><circle cx="15" cy="5" r="1"/><circle cx="15" cy="19" r="1"/></svg>
<div class="cb" style="left:695px;top:1651px"></div>
<div class="t" style="left:745.48px;top:1652.90px;font-size:28.8px;line-height:28.8px;color:#09090b;font-weight:400;transform:scaleX(1.0209);-webkit-text-stroke:0.55px;">Cover page</div>
<div class="badge" style="left:1421px;top:1645px;width:161px;height:44px"></div>
<div class="t" style="left:1435.74px;top:1655.25px;font-size:24.7px;line-height:24.7px;color:#71717a;font-weight:400;transform:scaleX(1.0370);-webkit-text-stroke:0.55px;">Cover page</div>
<div class="badge" style="left:1739px;top:1645px;width:203px;height:44px"></div>
<svg class="ic" style="left:1753px;top:1655px;color:#71717a" width="24" height="24" viewBox="0 0 24 24" fill="none" stroke="currentColor" stroke-width="2" stroke-linecap="round" stroke-linejoin="round" ><path d="M12 2v4"/><path d="m16.2 7.8 2.9-2.9"/><path d="M18 12h4"/><path d="m16.2 16.2 2.9 2.9"/><path d="M12 18v4"/><path d="m4.9 19.1 2.9-2.9"/><path d="M2 12h4"/><path d="m4.9 4.9 2.9 2.9"/></svg>
<div class="t" style="left:1783.65px;top:1655.25px;font-size:24.7px;line-height:24.7px;color:#71717a;font-weight:400;transform:scaleX(1.0497);-webkit-text-stroke:0.55px;">In Process</div>
<div class="t" style="left:2046.47px;top:1652.90px;font-size:28.8px;line-height:28.8px;color:#09090b;font-weight:400;transform:scaleX(0.9400);letter-spacing:-0.180px;">18</div>
<div class="t" style="left:2234.38px;top:1652.90px;font-size:28.8px;line-height:28.8px;color:#09090b;font-weight:400;transform:scaleX(1.0700);letter-spacing:8.826px;">5</div>
<div class="t" style="left:2325.11px;top:1652.90px;font-size:28.8px;line-height:28.8px;color:#09090b;font-weight:400;transform:scaleX(1.0025);">Eddie Lake</div>
<svg class="ic" style="left:2735px;top:1651px;color:#52525b" width="32" height="32" viewBox="0 0 24 24" fill="none" stroke="currentColor" stroke-width="2" stroke-linecap="round" stroke-linejoin="round" ><circle cx="12" cy="12" r="1"/><circle cx="12" cy="5" r="1"/><circle cx="12" cy="19" r="1"/></svg>
<div class="abs" style="left:562px;top:1825px;width:2252px;height:2px;background:#e4e4e7"></div>
<svg class="ic" style="left:598px;top:1757px;color:#71717a" width="32" height="32" viewBox="0 0 24 24" fill="none" stroke="currentColor" stroke-width="2" stroke-linecap="round" stroke-linejoin="round" ><circle cx="9" cy="12" r="1"/><circle cx="9" cy="5" r="1"/><circle cx="9" cy="19" r="1"/><circle cx="15" cy="12" r="1"/><circle cx="15" cy="5" r="1"/><circle cx="15" cy="19" r="1"/></svg>
<div class="cb" style="left:695px;top:1757px"></div>
<div class="t" style="left:746.39px;top:1758.90px;font-size:28.8px;line-height:28.8px;color:#09090b;font-weight:400;transform:scaleX(1.0585);-webkit-text-stroke:0.55px;">Table of contents</div>
<div class="badge" style="left:1421px;top:1751px;width:231px;height:44px"></div>
<div class="t" style="left:1436.54px;top:1761.25px;font-size:24.7px;line-height:24.7px;color:#71717a;font-weight:400;transform:scaleX(1.0700);letter-spacing:0.107px;-webkit-text-stroke:0.55px;">Table of contents</div>
<div class="badge" style="left:1739px;top:1751px;width:203px;height:44px"></div>
<svg class="ic" style="left:1753px;top:1761px;color:#2a9d90" width="24" height="24" viewBox="0 0 24 24" fill="none" stroke="currentColor" stroke-width="2" stroke-linecap="round" stroke-linejoin="round" ><circle cx="12" cy="12" r="10"/><path d="m9 12 2 2 4-4"/></svg>
<div class="t" style="left:1784.43px;top:1761.25px;font-size:24.7px;line-height:24.7px;color:#71717a;font-weight:400;transform:scaleX(1.0362);-webkit-text-stroke:0.55px;">Done</div>
<div class="t" style="left:2040.23px;top:1758.90px;font-size:28.8px;line-height:28.8px;color:#09090b;font-weight:400;transform:scaleX(1.0700);letter-spacing:2.370px;">29</div>
<div class="t" style="left:2216.86px;top:1758.90px;font-size:28.8px;line-height:28.8px;color:#09090b;font-weight:400;transform:scaleX(1.0700);letter-spacing:0.893px;">24</div>
<div class="t" style="left:2325.11px;top:1758.90px;font-size:28.8px;line-height:28.8px;color:#09090b;font-weight:400;transform:scaleX(1.0025);">Eddie Lake</div>
<svg class="ic" style="left:2735px;top:1757px;color:#52525b" width="32" height="32" viewBox="0 0 24 24" fill="none" stroke="currentColor" stroke-width="2" stroke-linecap="round" stroke-linejoin="round" ><circle cx="12" cy="12" r="1"/><circle cx="12" cy="5" r="1"/><circle cx="12" cy="19" r="1"/></svg>
</div></body></html>
